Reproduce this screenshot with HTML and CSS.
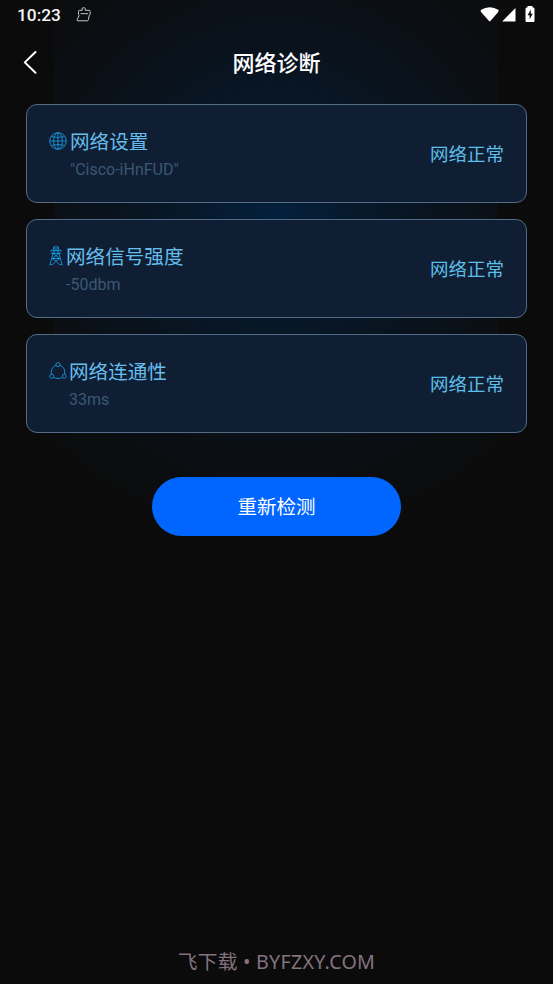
FILE: index.html
```html
<!DOCTYPE html>
<html lang="zh-CN">
<head>
<meta charset="utf-8">
<title>网络诊断</title>
<link rel="stylesheet" href="styles.css">
</head>
<body>
<div class="screen">
  <div class="status">
    <span class="time">10:23</span>
    <svg class="debug" width="16" height="16" viewBox="0 0 16 16" fill="none" stroke="#c4c4c4" stroke-width="1" stroke-linejoin="round"><path d="M3.500 3.300h2.700V1.600q0-.8.8-.8h1.500q.8 0 .8.800v1.700h3.800q1 0 1 1v3q0 .8-.8.900l-1 4.700q-.2.900-1 .9H2q-1.300 0-.8-1.100L3.200 8.200q-.7-.3-.7-1V4.300q0-1 1-1ZM4.500 6.700h7.500"/></svg>
    <svg class="wifi" width="20" height="17" viewBox="0 0 20 17"><path d="M.7 4Q9.700-1.700 18.700 4 18.700 5 18 6.300L10.400 15q-.7.700-1.400 0L1.300 6.300Q.4 5 .7 4Z" fill="#fff"/></svg>
    <svg class="signal" width="14" height="17" viewBox="0 0 14 17"><path d="M.2 15.500 13.500 2v13.500Z" fill="#fff"/></svg>
    <svg class="battery" width="10" height="17" viewBox="0 0 10 17"><path d="M2.500 1.500V0h5v1.500H8q1.500 0 1.500 1.200V15q0 1-1 1h-7q-1 0-1-1V2.700q0-1.200 1.500-1.200Z" fill="#fff"/><path d="M5.800 3.500 2.600 9.200h2v4L7.800 7.700H5.800Z" fill="#0b0b0b"/></svg>
  </div>
  <header class="header">
    <svg class="back" width="16" height="26" viewBox="0 0 16 26" fill="none" stroke="#fff" stroke-width="2" stroke-linecap="round" stroke-linejoin="round"><path d="M13.500 3 2.800 13.400 13.500 23.700"/></svg>
    <h1>网络诊断</h1>
  </header>
  <main class="cards">
    <section class="card">
      <svg class="icon globe" width="18" height="18" viewBox="0 0 18 18"><circle cx="9" cy="9" r="8.300"/><ellipse cx="9" cy="9" rx="4.400" ry="8.300"/><path d="M9 .7v16.600M.7 9h16.600M2.200 4.600q6.800 1.800 13.600 0M2.200 13.400q6.800-1.800 13.600 0"/></svg>
      <div class="info"><h2>网络设置</h2><p>"Cisco-iHnFUD"</p></div>
      <span class="state">网络正常</span>
    </section>
    <section class="card">
      <svg class="icon tower" width="14" height="20" viewBox="0 0 14 20"><path d="M4.800.8h4.400L10 7.500l3 11.200M4.800.8 4 7.500 1 18.700M2 4.300h10M2 7.500h10M2 4.300v1.500M12 4.300v1.500M4.600 1l5 6.500M9.400 1l-5 6.500M4 7.500l7 5M10 7.500l-7 5M3 12.500h8M.5 18.700h3L7 15l3.500 3.700h3M3 12.500 7 15l4-2.500"/></svg>
      <div class="info"><h2>网络信号强度</h2><p>-50dbm</p></div>
      <span class="state">网络正常</span>
    </section>
    <section class="card">
      <svg class="icon nodes" width="18" height="18" viewBox="0 0 18 18"><circle cx="9" cy="2.600" r="2"/><circle cx="2.700" cy="14.200" r="2"/><circle cx="15.300" cy="14.200" r="2"/><path d="M7 3.200Q1.700 5.300 2.300 12.200M11 3.200q5.300 2.100 4.700 9M4.300 15.700q4.700 1.600 9.400 0"/></svg>
      <div class="info"><h2>网络连通性</h2><p>33ms</p></div>
      <span class="state">网络正常</span>
    </section>
  </main>
  <button class="retry">重新检测</button>
  <footer class="mark">飞下载 • BYFZXY.COM</footer>
</div>
</body>
</html>
```
FILE: styles.css
```css
* { box-sizing: border-box; }
body {
  margin: 0;
  background: #0b0b0b;
  font-family: Roboto, "Noto Sans CJK SC", sans-serif;
}
h1, h2, p { margin: 0; font-weight: 400; }
svg { display: block; flex: none; }
.screen {
  height: 984px;
  display: flex;
  flex-direction: column;
  background: radial-gradient(circle 330px at 222px 216px, #04203d 0, #07192b 25%, #09131e 50%, #0b0f14 72%, #0b0b0b 100%) 54px 0 / 444px 600px no-repeat;
}
.status {
  height: 32px;
  display: flex;
  align-items: flex-start;
  padding: 6px 17px 0 17px;
}
.time {
  width: 59px;
  margin-top: -1px;
  font-size: 17.3px;
  line-height: 20px;
  font-weight: 500;
  color: #f4f4f4;
}
.debug { margin-top: 1px; }
.wifi { margin-left: auto; }
.signal { margin-left: 2px; }
.battery { margin: 0 1px 0 9px; }
.header {
  height: 72px;
  padding: 17px 24px 0 22px;
  display: grid;
  grid-template-columns: 16px 1fr 14px;
  align-items: start;
}
.header h1 {
  padding-top: 1px;
  text-align: center;
  font-size: 22px;
  line-height: 28px;
  font-weight: 500;
  color: #fff;
}
.cards {
  display: flex;
  flex-direction: column;
  gap: 16px;
  padding: 0 26px;
}
.card {
  height: 99px;
  display: flex;
  padding: 0 22px;
  border: 1px solid #526b86;
  border-radius: 11px;
  background: #101e33;
}
.icon {
  fill: none;
  stroke: #168bcb;
  stroke-width: 1;
  stroke-linejoin: round;
}
.globe { margin: 27px 3px 0 0; }
.tower { margin: 26px 3px 0 0; }
.nodes { margin: 27px 2px 0 0; }
.info h2 {
  margin-top: 24px;
  font-size: 19.6px;
  line-height: 28px;
  color: #64bdec;
}
.info p {
  margin-top: 3px;
  font-size: 16px;
  line-height: 20px;
  color: #3a5873;
}
.state {
  margin-left: auto;
  padding-top: 2px;
  align-self: center;
  font-size: 18.5px;
  line-height: 26px;
  color: #5cbfe9;
}
.retry {
  width: 249px;
  height: 59px;
  margin: 44px auto 0 152px;
  padding: 2px 0 0;
  border: 0;
  border-radius: 30px;
  background: #0066ff;
  color: #fff;
  font: 400 19.5px/28px Roboto, "Noto Sans CJK SC", sans-serif;
}
.mark {
  margin-top: auto;
  height: 36px;
  text-align: center;
  font: 400 19.7px/28px "Noto Sans", "Noto Sans CJK SC", sans-serif;
  letter-spacing: 0.27px;
  color: #85727f;
}
```
